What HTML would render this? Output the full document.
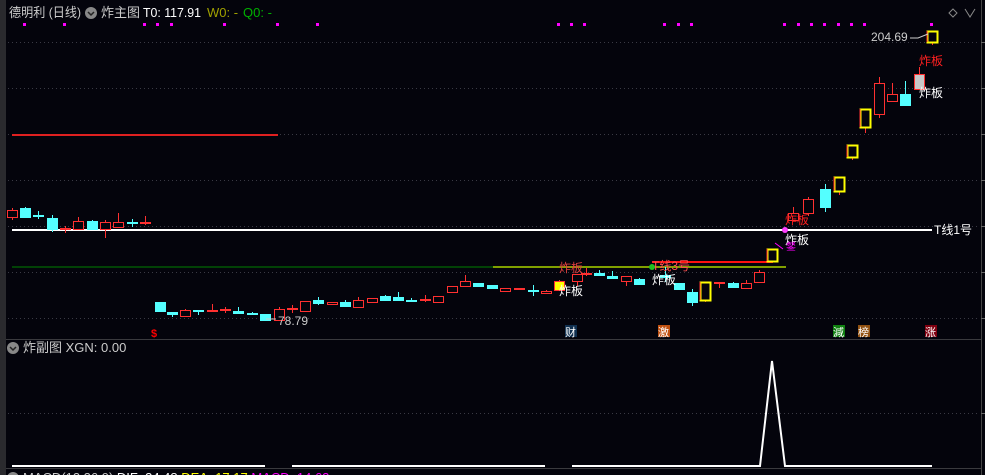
<!DOCTYPE html>
<html><head><meta charset="utf-8"><style>
html,body{margin:0;padding:0;background:#04040c;width:985px;height:475px;overflow:hidden}
svg{display:block;font-family:"Liberation Sans","Noto Sans CJK SC",sans-serif}
</style></head><body>
<svg id="s" width="985" height="475" viewBox="0 0 985 475">
<rect width="985" height="475" fill="#04040c"/>
<rect x="0" y="0" width="6" height="475" fill="#2a2a2e"/>
<line x1="981.5" y1="0" x2="981.5" y2="475" stroke="#444" stroke-width="1"/>
<line x1="6" y1="339.5" x2="981" y2="339.5" stroke="#3a3a3e"/>
<line x1="6" y1="468.5" x2="981" y2="468.5" stroke="#3a3a3e"/>
<g stroke="#3a3a44" stroke-dasharray="1 3">
<line x1="8" y1="42.5" x2="978" y2="42.5"/><line x1="8" y1="88.5" x2="978" y2="88.5"/>
<line x1="8" y1="134.5" x2="978" y2="134.5"/><line x1="8" y1="180.5" x2="978" y2="180.5"/>
<line x1="8" y1="226.5" x2="978" y2="226.5"/><line x1="8" y1="272.5" x2="978" y2="272.5"/>
<line x1="8" y1="318.5" x2="978" y2="318.5"/><line x1="8" y1="413.5" x2="978" y2="413.5"/>
</g>
<g stroke="#666"><line x1="981" y1="42.5" x2="985" y2="42.5"/><line x1="981" y1="88.5" x2="985" y2="88.5"/><line x1="981" y1="134.5" x2="985" y2="134.5"/><line x1="981" y1="180.5" x2="985" y2="180.5"/><line x1="981" y1="226.5" x2="985" y2="226.5"/><line x1="981" y1="272.5" x2="985" y2="272.5"/><line x1="981" y1="318.5" x2="985" y2="318.5"/><line x1="981" y1="413.5" x2="985" y2="413.5"/></g>
<!-- header -->
<text x="9" y="17" font-size="13" fill="#ccc" textLength="72" lengthAdjust="spacingAndGlyphs">德明利 (日线)</text>
<circle cx="91" cy="13" r="6" fill="#888"/><path d="M88 12l3 3 3-3" stroke="#222" fill="none" stroke-width="1.5"/>
<text x="101" y="17" font-size="13" fill="#ccc">炸主图</text>
<text x="143" y="17" font-size="13" fill="#fff" textLength="58" lengthAdjust="spacingAndGlyphs">T0: 117.91</text>
<text x="207" y="17" font-size="13" fill="#a0a000">W0: -</text>
<text x="243" y="17" font-size="13" fill="#00b000">Q0: -</text>
<g fill="#ff00ff">
<rect x="23" y="23" width="3" height="3"/><rect x="63" y="23" width="3" height="3"/><rect x="143" y="23" width="3" height="3"/><rect x="156" y="23" width="3" height="3"/><rect x="170" y="23" width="3" height="3"/><rect x="223" y="23" width="3" height="3"/><rect x="276" y="23" width="3" height="3"/><rect x="316" y="23" width="3" height="3"/>
<rect x="557" y="23" width="3" height="3"/><rect x="570" y="23" width="3" height="3"/><rect x="583" y="23" width="3" height="3"/><rect x="663" y="23" width="3" height="3"/><rect x="677" y="23" width="3" height="3"/><rect x="690" y="23" width="3" height="3"/><rect x="783" y="23" width="3" height="3"/><rect x="797" y="23" width="3" height="3"/><rect x="810" y="23" width="3" height="3"/><rect x="823" y="23" width="3" height="3"/><rect x="837" y="23" width="3" height="3"/><rect x="850" y="23" width="3" height="3"/><rect x="863" y="23" width="3" height="3"/><rect x="930" y="23" width="3" height="3"/>
</g>
<path d="M949 13l4-4 4 4-4 4z" stroke="#888" fill="none"/><path d="M965 9l5 8 5-8" stroke="#888" fill="none"/>
<!-- lines -->
<line x1="12" y1="135" x2="278" y2="135" stroke="#e02020" stroke-width="2"/>
<line x1="12" y1="230" x2="932" y2="230" stroke="#fff" stroke-width="2"/>
<line x1="12" y1="267" x2="493" y2="267" stroke="#008000" stroke-width="1"/>
<line x1="493" y1="267" x2="786" y2="267" stroke="#80a000" stroke-width="2"/>
<line x1="652" y1="262" x2="773" y2="262" stroke="#ff1010" stroke-width="2"/>
<g id="c"></g>
<!-- labels -->
<text x="934" y="234" font-size="12" fill="#fff">T线1号</text>
<text x="871" y="41" font-size="12" fill="#ccc">204.69</text>
<path d="M910 38h8l10-4" stroke="#ccc" fill="none"/>
<path d="M266 319l10 0" stroke="#ccc"/><text x="278" y="325" font-size="12" fill="#ccc">78.79</text>
<text x="919" y="65" font-size="12" fill="#ff2020">炸板</text>
<text x="919" y="97" font-size="12" fill="#fff">炸板</text>
<text x="785" y="224" font-size="12" fill="#ff2020">炸板</text>
<text x="785" y="244" font-size="12" fill="#fff">炸板</text>
<text x="786" y="250" font-size="10" fill="#ff00ff">錖</text>
<circle cx="785" cy="230" r="3" fill="#ff40ff"/>
<path d="M775 243l8 6" stroke="#ff00ff"/>
<text x="559" y="272" font-size="12" fill="#e04040">炸板</text>
<text x="559" y="295" font-size="12" fill="#fff">炸板</text>
<text x="652" y="270" font-size="12" fill="#ff5050">T线3号</text>
<text x="652" y="284" font-size="12" fill="#fff">炸板</text>
<circle cx="652" cy="267" r="3" fill="#20c020"/>
<text x="151" y="337" font-size="11" font-weight="bold" fill="#ff0000">$</text>
<rect x="565" y="325" width="12" height="12" fill="#103050"/><text x="565" y="336" font-size="11" fill="#fff">财</text>
<rect x="658" y="325" width="12" height="12" fill="#c05010"/><text x="658" y="336" font-size="11" fill="#fff">激</text>
<rect x="833" y="325" width="12" height="12" fill="#108010"/><text x="833" y="336" font-size="11" fill="#fff">減</text>
<rect x="858" y="325" width="12" height="12" fill="#905010"/><text x="858" y="336" font-size="11" fill="#fff">榜</text>
<rect x="925" y="325" width="12" height="12" fill="#800010"/><text x="925" y="336" font-size="11" fill="#fff">涨</text>
<!-- sub panel -->
<circle cx="13" cy="348" r="6" fill="#888"/><path d="M10 347l3 3 3-3" stroke="#222" fill="none" stroke-width="1.5"/>
<text x="23" y="352" font-size="13" fill="#ccc">炸副图 XGN: 0.00</text>
<g stroke="#fff" stroke-width="2" fill="none">
<line x1="12" y1="466" x2="265" y2="466"/><line x1="292" y1="466" x2="545" y2="466"/>
<polyline points="572,466 760,466 772,361 785,466 932,466"/>
</g>
<circle cx="13" cy="478" r="6" fill="#888"/>
<text x="23" y="482" font-size="13" fill="#ccc">MACD(12,26,9) <tspan fill="#fff">DIF: 34.48</tspan> <tspan fill="#ffff00">DEA: 17.17</tspan> <tspan fill="#ff00ff">MACD: 14.62</tspan></text>
</svg>
<script>
var C=[[12,210,217,208,220,'r'],[25,208,217,207,218,'c'],[38,215,215,211,219,'c'],[52,218,229,215,232,'c'],[65,228,228,226,233,'r'],[78,221,229,217,229,'r'],[92,221,229,220,229,'c'],[105,222,229,220,238,'r'],[118,222,227,213,227,'r'],[132,222,222,219,227,'c'],[145,222,223,216,225,'rf'],
[160,302,311,302,312,'c'],[172,312,314,312,317,'c'],[185,310,316,309,317,'r'],[198,310,311,310,315,'c'],[212,310,311,304,311,'rf'],[225,309,312,307,313,'rf'],[238,311,313,307,313,'c'],[252,313,313,312,314,'c'],[265,314,320,314,320,'c'],[279,309,320,307,321,'r'],[292,308,310,305,313,'rf'],[305,301,311,301,311,'r'],[318,300,303,297,305,'c'],[332,302,304,302,305,'r'],[345,302,306,300,307,'c'],[358,300,307,297,308,'r'],[372,298,302,298,302,'r'],[385,296,300,295,301,'c'],[398,297,300,292,300,'c'],[411,300,300,298,301,'c'],[425,299,301,295,302,'rf'],[438,296,302,296,302,'r'],[452,286,292,286,292,'r'],[465,281,286,275,286,'r'],[478,283,286,283,286,'c'],[492,285,288,285,288,'c'],[505,288,291,288,291,'r'],[519,288,289,288,289,'rf'],[533,290,290,285,296,'c'],[546,291,293,290,294,'r'],[559,281,290,280,290,'yf'],[577,274,281,274,286,'r'],[586,273,274,268,276,'rf'],[599,273,275,270,275,'c'],[612,276,278,271,279,'c'],[626,276,281,276,286,'r'],[639,279,284,278,285,'c'],[665,275,277,267,282,'c'],[679,283,289,283,289,'c'],[692,292,302,289,306,'c'],[705,282,300,282,302,'y'],[719,282,283,282,288,'rf'],[733,283,287,282,288,'c'],[746,283,288,280,288,'r'],[759,272,282,270,282,'r'],[772,249,261,249,261,'y'],[793,213,220,207,220,'r'],[808,199,213,197,216,'r'],[825,189,207,184,212,'c'],[839,177,191,177,195,'y'],[852,145,157,145,160,'y'],[865,109,127,109,133,'y'],[879,83,114,77,118,'r'],[892,94,101,83,101,'r'],[905,94,105,81,105,'c'],[919,74,89,67,89,'g'],[932,31,42,31,45,'y']];
var s='';C.forEach(function(k){var x=k[0],o=k[1],c=k[2],h=k[3],l=k[4],t=k[5];var w=10,y1=Math.min(o,c),y2=Math.max(o,c),hh=Math.max(y2-y1,1);
var col=t=='c'?'#54ffff':'#ff3030';
s+='<line x1="'+(x+.5)+'" y1="'+h+'" x2="'+(x+.5)+'" y2="'+l+'" stroke="'+col+'"/>';
if(t=='c')s+='<rect x="'+(x-5)+'" y="'+y1+'" width="'+(w+1)+'" height="'+(hh+1)+'" fill="#54ffff"/>';
else if(t=='yf')s+='<rect x="'+(x-4.5)+'" y="'+(y1+.5)+'" width="'+w+'" height="'+hh+'" fill="#ffff00" stroke="#ff3030"/>';
else if(t=='rf'||hh<2)s+='<rect x="'+(x-5)+'" y="'+y1+'" width="'+(w+1)+'" height="2" fill="'+col+'"/>';
else if(t=='y')s+='<rect x="'+(x-4.5)+'" y="'+(y1+.5)+'" width="'+w+'" height="'+hh+'" fill="#04040c" stroke="#ffff00" stroke-width="2"/><line x1="'+(x-5)+'" y1="'+y1+'" x2="'+(x-5)+'" y2="'+y2+'" stroke="#ff3030"/>';
else if(t=='g')s+='<rect x="'+(x-4.5)+'" y="'+(y1+.5)+'" width="'+w+'" height="'+hh+'" fill="#c8c8c8" stroke="#ff3030"/>';
else s+='<rect x="'+(x-4.5)+'" y="'+(y1+.5)+'" width="'+w+'" height="'+hh+'" fill="#04040c" stroke="#ff3030"/>';});
document.getElementById('c').innerHTML=s;
</script>
</body></html>
